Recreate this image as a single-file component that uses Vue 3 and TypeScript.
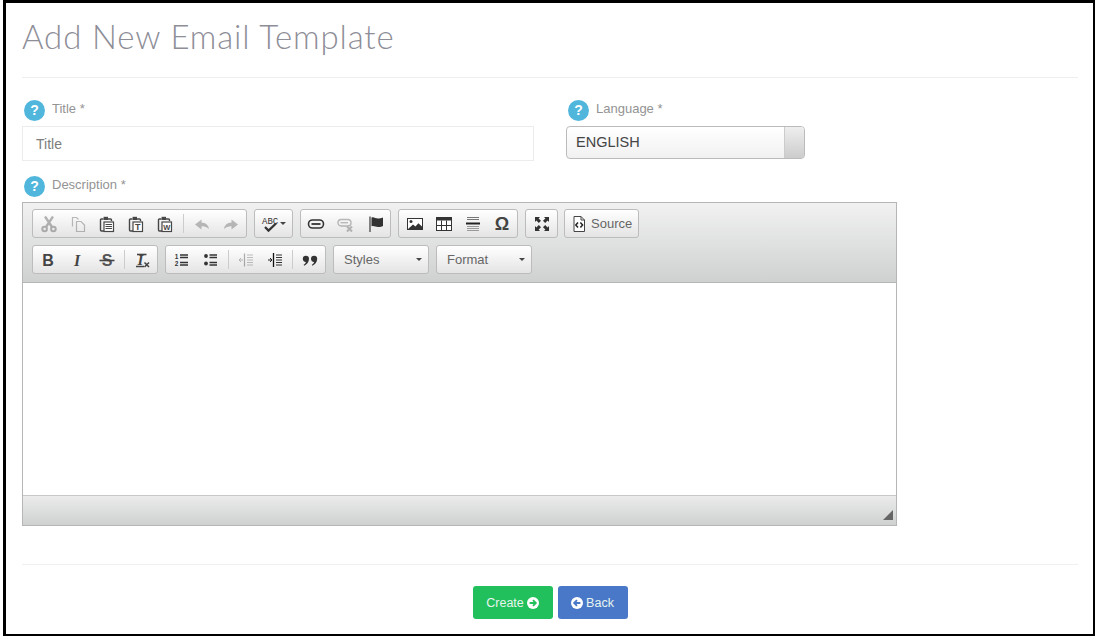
<script setup lang="ts">
type Item = { icon: string; off?: boolean } | "sep";

const K = "#474747";

const clip = `<g fill="none" stroke="${K}" stroke-width="1.4"><path d="M4.5 3H2.4C1.8 3 1.5 3.3 1.5 4V14C1.5 14.7 1.8 15 2.4 15H5"/><path d="M9 3H11.6C12.2 3 12.5 3.3 12.5 4V5"/></g><path d="M4.6 .8H9V4H4.6Z" fill="${K}"/>`;

const icons: Record<string, string> = {
  cut: `<g fill="none" stroke="#333" stroke-width="2"><circle cx="3.6" cy="13" r="2.3"/><circle cx="12.4" cy="13" r="2.3"/><path d="M5 11 12 .5M11 11 4 .5" stroke-width="2.3"/></g>`,
  copy: `<g fill="none" stroke="${K}" stroke-width="1.2"><path d="M2.5 10.5V1.5H6.5L8.5 3.5"/><path d="M6.5 5.5H11L14.5 9V15.5H6.5Z"/></g>`,
  paste: `${clip}<rect x="5" y="6" width="9.5" height="9.5" fill="#fff" stroke="${K}" stroke-width="1.2"/><path d="M6.5 8.5H13M6.5 10.5H13M6.5 12.5H13" stroke="${K}" stroke-width="1.2"/>`,
  pastetext: `${clip}<rect x="5" y="6" width="9.5" height="9.5" fill="#fff" stroke="${K}" stroke-width="1.2"/><text x="9.75" y="14" font-size="9" font-weight="700" text-anchor="middle" fill="${K}" font-family="Liberation Sans">T</text>`,
  pasteword: `${clip}<rect x="5" y="6" width="9.5" height="9.5" fill="#fff" stroke="${K}" stroke-width="1.2"/><text x="9.75" y="13.7" font-size="7.5" font-weight="700" text-anchor="middle" fill="${K}" font-family="Liberation Sans">W</text>`,
  undo: `<path d="M7.5 3.5 1 8.5 7.5 13.5V10.3C10 10 12.6 10.8 15 13 14.4 8.8 11.5 6.6 7.5 6.4Z" fill="${K}"/>`,
  redo: `<path d="M8.5 3.5 15 8.5 8.5 13.5V10.3C6 10 3.4 10.8 1 13 1.6 8.8 4.5 6.6 8.5 6.4Z" fill="${K}"/>`,
  spell: `<text x="0" y="7.8" font-size="9" fill="#333" font-family="Liberation Mono">ABC</text><path d="M3 11 6.5 14.6 14 7.5" fill="none" stroke="#333" stroke-width="2.2"/>`,
  link: `<rect x="-.5" y="4" width="15" height="8" rx="4" fill="none" stroke="#333" stroke-width="1.6"/><path d="M2.5 8H11.5" stroke="#333" stroke-width="1.8"/>`,
  unlink: `<rect x="0" y="3.5" width="13" height="6.5" rx="3.2" fill="none" stroke="${K}" stroke-width="1.4"/><path d="M2.5 6.7H10" stroke="${K}" stroke-width="1.3"/><path d="M9 10.5 14 15.5M14 10.5 9 15.5" stroke="${K}" stroke-width="2"/>`,
  anchor: `<path d="M3 .5V16" stroke="#666" stroke-width="1.6"/><path d="M4.5 1.5C7 .8 8.5 2.6 11 2.6 12.5 2.6 14 2 16 1.4V10C14 11 12.5 11.2 11 11 8.5 10.8 7 9.5 4.5 10.2Z" fill="#333"/>`,
  image: `<rect x="0.5" y="2.5" width="15" height="11" fill="#fff" stroke="#333"/><circle cx="4" cy="5.6" r="1.5" fill="#333"/><path d="M1 13 6 8.6 8.4 10.6 11.4 7.2 15 10.5V13Z" fill="#333"/>`,
  table: `<rect x="0.5" y="1.5" width="15" height="13" fill="#fff" stroke="#333"/><path d="M1 2H15V4.5H1Z" fill="#333"/><path d="M5.5 4.5V14M10.5 4.5V14M1 9.5H15" stroke="#333"/>`,
  rule: `<path d="M2 1.5H14M2 3.5H14" stroke="#777"/><path d="M1 6.5H15V8.5H1Z" fill="#222"/><path d="M2 10.5H14M2 12.5H14M2 14.5H14" stroke="#999"/>`,
  omega: `<text x="8" y="14" font-size="18" font-weight="700" text-anchor="middle" fill="#444" font-family="Liberation Sans">Ω</text>`,
  max: `<path d="M1 1H6L4.6 2.4 7 4.8 4.8 7 2.4 4.6 1 6ZM15 1V6L13.6 4.6 11.2 7 9 4.8 11.4 2.4 10 1ZM1 15V10L2.4 11.4 4.8 9 7 11.2 4.6 13.6 6 15ZM15 15H10L11.4 13.6 9 11.2 11.2 9 13.6 11.4 15 10Z" fill="#333"/>`,
  source: `<path d="M3 .5H10L13.5 4V15.5H3Z" fill="#fff" stroke="#444"/><path d="M10 .5V4H13.5" fill="none" stroke="#444"/><path d="M7 6.5 4.8 9 7 11.5M9.4 6.5 11.6 9 9.4 11.5" fill="none" stroke="#222" stroke-width="1.5"/>`,
  bold: `<text x="7" y="14" font-size="16" font-weight="700" text-anchor="middle" fill="#444" font-family="Liberation Sans">B</text>`,
  italic: `<text x="7" y="14" font-size="16" font-weight="700" font-style="italic" text-anchor="middle" fill="#444" font-family="Liberation Serif">I</text>`,
  strike: `<text x="8" y="14" font-size="16" font-weight="700" text-anchor="middle" fill="#555" font-family="Liberation Sans">S</text><path d="M0.5 8.5H15.5" stroke="#444" stroke-width="1.6"/>`,
  clear: `<text x="6.5" y="12.5" font-size="15" font-weight="700" font-style="italic" text-anchor="middle" fill="#444" font-family="Liberation Serif">I</text><path d="M2 14.5H10M10.5 10.5 15 15M15 10.5 10.5 15" stroke="#444" stroke-width="1.5"/><path d="M3 2.5H12.5" stroke="#444" stroke-width="1.6"/>`,
  ol: `<text x="2.6" y="7" font-size="6.5" font-weight="700" text-anchor="middle" fill="#333" font-family="Liberation Sans">1</text><text x="2.6" y="14" font-size="6.5" font-weight="700" text-anchor="middle" fill="#333" font-family="Liberation Sans">2</text><path d="M6 3H14M6 5.5H14M6 10.5H14M6 13H14" stroke="#333" stroke-width="1.3"/>`,
  ul: `<circle cx="3" cy="4" r="1.9" fill="#333"/><circle cx="3" cy="11.5" r="1.9" fill="#333"/><path d="M6.5 3H14M6.5 5.5H14M6.5 10.5H14M6.5 13H14" stroke="#333" stroke-width="1.3"/>`,
  outdent: `<path d="M1 8H5M1 8 3 6M1 8 3 10" fill="none" stroke="#444"/><path d="M6.5 1.5V14.5" stroke="#222" stroke-width="1.2"/><path d="M9 3H15M9 5.5H15M9 8H15M9 10.5H15M9 13H15" stroke="#555"/>`,
  indent: `<path d="M1 8H5M5 8 3 6M5 8 3 10" fill="none" stroke="#222"/><path d="M6.5 1V15" stroke="#111" stroke-width="1.3"/><path d="M9 3H15M9 5.5H15M9 8H15M9 10.5H15M9 13H15" stroke="#333"/>`,
  quote: `<path d="M.8 6.8A3.1 3.1 0 1 1 7 6.8C7 10 5 12.6 2.2 13.8L1.6 12.7C2.9 11.9 3.7 11 3.9 9.9A3.1 3.1 0 0 1 .8 6.8ZM9 6.8A3.1 3.1 0 1 1 15.2 6.8C15.2 10 13.2 12.6 10.4 13.8L9.8 12.7C11.1 11.9 11.9 11 12.1 9.9A3.1 3.1 0 0 1 9 6.8Z" fill="#333"/>`,
};

const rowOne: Item[][] = [
  [
    { icon: "cut", off: true },
    { icon: "copy", off: true },
    { icon: "paste" },
    { icon: "pastetext" },
    { icon: "pasteword" },
    "sep",
    { icon: "undo", off: true },
    { icon: "redo", off: true },
  ],
  [{ icon: "spell" }],
  [{ icon: "link" }, { icon: "unlink", off: true }, { icon: "anchor" }],
  [{ icon: "image" }, { icon: "table" }, { icon: "rule" }, { icon: "omega" }],
  [{ icon: "max" }],
];

const rowTwo: Item[][] = [
  [{ icon: "bold" }, { icon: "italic" }, { icon: "strike" }, "sep", { icon: "clear" }],
  [{ icon: "ol" }, { icon: "ul" }, "sep", { icon: "outdent", off: true }, { icon: "indent" }, "sep", { icon: "quote" }],
];
</script>

<template>
  <div class="frame">
    <header class="head">
      <h1>Add New Email Template</h1>
    </header>

    <div class="row">
      <div class="field title-field">
        <label class="lbl"><span class="help">?</span>Title *</label>
        <input class="text-input" type="text" placeholder="Title" />
      </div>
      <div class="field lang-field">
        <label class="lbl"><span class="help">?</span>Language *</label>
        <div class="select">
          <span class="select-val">ENGLISH</span>
          <span class="select-btn"></span>
        </div>
      </div>
    </div>

    <label class="lbl desc-lbl"><span class="help">?</span>Description *</label>
    <div class="editor">
      <div class="toolbar">
        <div class="tool-row">
          <div v-for="(group, i) in rowOne" :key="i" class="group">
            <template v-for="(item, j) in group" :key="j">
              <span v-if="item === 'sep'" class="sep"></span>
              <span v-else class="btn" :class="{ off: item.off, spell: item.icon === 'spell' }">
                <svg viewBox="0 0 16 16" width="16" height="16" v-html="icons[item.icon]"></svg>
                <i v-if="item.icon === 'spell'" class="caret"></i>
              </span>
            </template>
          </div>
          <div class="group source">
            <svg viewBox="0 0 16 16" width="16" height="16" v-html="icons.source"></svg>
            <span>Source</span>
          </div>
        </div>
        <div class="tool-row">
          <div v-for="(group, i) in rowTwo" :key="i" class="group">
            <template v-for="(item, j) in group" :key="j">
              <span v-if="item === 'sep'" class="sep"></span>
              <span v-else class="btn" :class="{ off: item.off }">
                <svg viewBox="0 0 16 16" width="16" height="16" v-html="icons[item.icon]"></svg>
              </span>
            </template>
          </div>
          <div class="group combo"><span>Styles</span><i class="caret"></i></div>
          <div class="group combo"><span>Format</span><i class="caret"></i></div>
        </div>
      </div>
      <div class="editor-body"></div>
      <div class="editor-foot"><i class="grip"></i></div>
    </div>

    <footer class="foot">
      <button class="action create" type="button">
        Create
        <svg viewBox="0 0 16 16" width="12" height="12">
          <circle cx="8" cy="8" r="8" fill="#fff" />
          <path d="M3.5 8H11M8 4.2 11.8 8 8 11.8" fill="none" stroke="#21c05c" stroke-width="2.4" />
        </svg>
      </button>
      <button class="action back" type="button">
        <svg viewBox="0 0 16 16" width="12" height="12">
          <circle cx="8" cy="8" r="8" fill="#fff" />
          <path d="M12.5 8H5M8 4.2 4.2 8 8 11.8" fill="none" stroke="#4a78c8" stroke-width="2.4" />
        </svg>
        Back
      </button>
    </footer>
  </div>
</template>

<style>
body {
  background: #fff;
}
</style>

<style scoped>
.frame {
  box-sizing: border-box;
  width: 1092px;
  height: 636px;
  margin-left: 3px;
  border: solid #000;
  border-width: 3px 2px 2px 3px;
  padding: 0 15px 0 16px;
  font-family: "Liberation Sans", Arial, sans-serif;
  color: #888;
}

.head {
  height: 74px;
  border-bottom: 1px solid #eee;
}

.head h1 {
  margin: 0;
  padding-top: 13px;
  font-family: Lato, sans-serif;
  font-size: 33px;
  line-height: 40px;
  font-weight: 300;
  letter-spacing: 0.85px;
  color: #8e8e98;
}

.row {
  display: flex;
  gap: 32px;
  margin-top: 21px;
}

.title-field {
  width: 512px;
}

.lang-field {
  width: 239px;
}

.lbl {
  display: flex;
  height: 22px;
  font-size: 13px;
  line-height: 20px;
  color: #939393;
}

.help {
  box-sizing: border-box;
  align-self: center;
  width: 21px;
  height: 21px;
  margin: 0 7px 0 2px;
  border-radius: 50%;
  background: #51b6dc;
  color: #fff;
  font-size: 14px;
  font-weight: 700;
  line-height: 21px;
  text-align: center;
}

.text-input {
  display: block;
  box-sizing: border-box;
  width: 100%;
  height: 35px;
  margin-top: 5px;
  padding: 0 13px;
  border: 1px solid #ececec;
  outline: none;
  font: 14px "Liberation Sans", Arial, sans-serif;
}

.text-input::placeholder {
  color: #7d7d7d;
  opacity: 1;
}

.select {
  display: flex;
  box-sizing: border-box;
  height: 33px;
  margin-top: 5px;
  border: 1px solid #bbb;
  border-radius: 4px;
  background: linear-gradient(#fff, #f1f1f1);
  overflow: hidden;
}

.select-val {
  flex: 1;
  padding-left: 9px;
  font-size: 14.5px;
  line-height: 31px;
  color: #444;
}

.select-btn {
  width: 19px;
  border-left: 1px solid #ccc;
  background: linear-gradient(#eee, #ccc);
}

.desc-lbl {
  margin-top: 14px;
}

.editor {
  display: flex;
  flex-direction: column;
  box-sizing: border-box;
  width: 875px;
  height: 324px;
  margin-top: 5px;
  border: 1px solid #b6b6b6;
}

.toolbar {
  box-sizing: border-box;
  height: 80px;
  padding: 6px 0 0 9px;
  border-bottom: 1px solid #b6b6b6;
  background: linear-gradient(#f1f1f1, #cfd1d1);
}

.tool-row {
  display: flex;
  gap: 7px;
  height: 29px;
  margin-bottom: 7px;
}

.group {
  display: flex;
  align-items: center;
  box-sizing: border-box;
  padding: 0 1px;
  border: 1px solid #bcbcbc;
  border-radius: 3px;
  background: linear-gradient(#fff, #e4e4e4);
}

.btn {
  display: flex;
  align-items: center;
  justify-content: center;
  width: 29px;
  height: 100%;
}

.btn svg {
  overflow: visible;
}

.btn.off svg {
  opacity: 0.35;
}

.btn.spell {
  width: 35px;
  gap: 2px;
}

.sep {
  width: 1px;
  height: 19px;
  margin: 0 2.5px;
  background: #ccc;
}

.tool-row:first-child .sep {
  margin: 0 3.5px;
}

.caret {
  display: block;
  width: 0;
  height: 0;
  border: 3px solid transparent;
  border-top-color: #444;
  border-bottom: 0;
}

.source {
  gap: 4px;
  margin-left: -1px;
  padding: 0 6px;
  font-size: 13px;
  color: #666;
}

.combo {
  justify-content: space-between;
  width: 96px;
  padding: 0 6px 0 10px;
  font-size: 13px;
  color: #666;
}

.editor-body {
  flex: 1;
  background: #fff;
}

.editor-foot {
  position: relative;
  height: 29px;
  border-top: 1px solid #c8c8c8;
  background: linear-gradient(#ebebeb, #cfd1d1);
}

.grip {
  position: absolute;
  right: 3px;
  bottom: 5px;
  width: 0;
  height: 0;
  border-style: solid;
  border-width: 0 0 10px 10px;
  border-color: transparent transparent #666 transparent;
}

.foot {
  display: flex;
  justify-content: center;
  gap: 5px;
  margin-top: 38px;
  padding-top: 21px;
  border-top: 1px solid #f0f0f0;
}

.action {
  display: flex;
  align-items: center;
  justify-content: center;
  gap: 3px;
  height: 33px;
  padding: 0;
  border: 0;
  border-radius: 3px;
  color: #e8f5ee;
  font: 12.5px "Liberation Sans", Arial, sans-serif;
}

.create {
  width: 80px;
  background: #21c05c;
}

.back {
  width: 70px;
  background: #4a78c8;
}
</style>
